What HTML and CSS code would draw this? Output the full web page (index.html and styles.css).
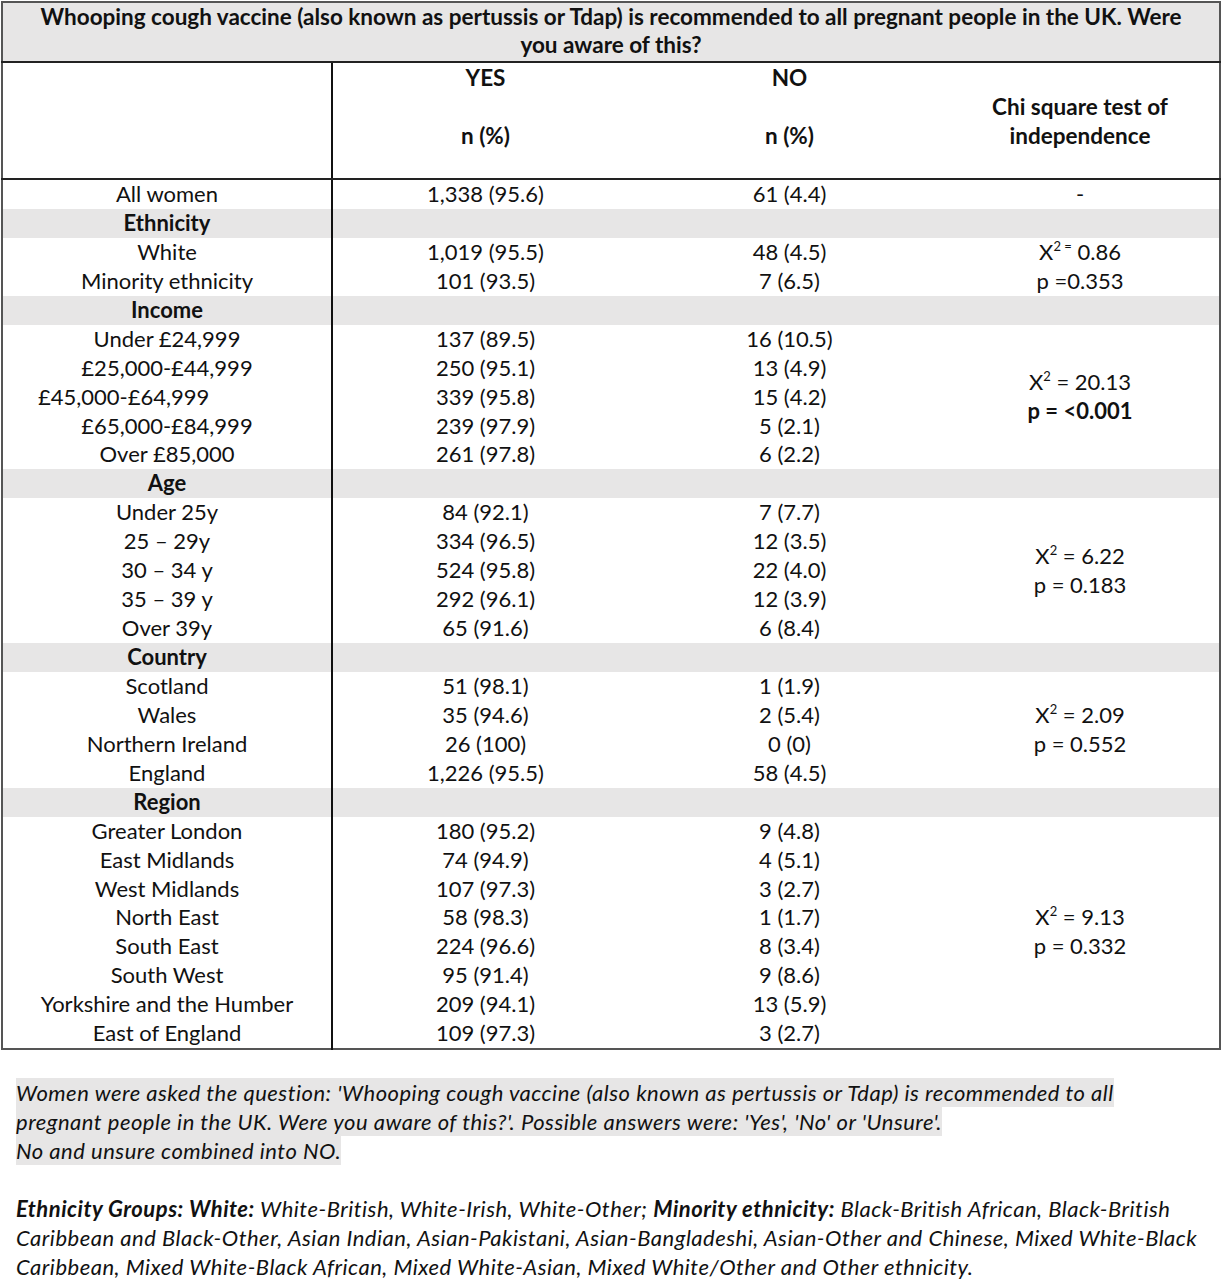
FILE: index.html
```html
<!DOCTYPE html>
<html lang="en">
<head>
<meta charset="utf-8">
<title>Whooping cough vaccine awareness</title>
<link rel="stylesheet" href="styles.css">
</head>
<body>
<table class="data">
  <colgroup>
    <col class="c1"><col class="c2"><col class="c3"><col class="c4">
  </colgroup>
  <thead>
    <tr class="title-row">
      <th colspan="4">Whooping cough vaccine (also known as pertussis or Tdap) is recommended to all pregnant people in the UK. Were<br>you aware of this?</th>
    </tr>
    <tr class="head-row">
      <th class="lab"></th>
      <th>YES<br><br>n (%)</th>
      <th>NO<br><br>n (%)</th>
      <th><br>Chi square test of<br>independence</th>
    </tr>
  </thead>
  <tbody>
    <tr><td class="lab">All women</td><td>1,338 (95.6)</td><td>61 (4.4)</td><td>-</td></tr>

    <tr class="sec"><td class="lab">Ethnicity</td><td></td><td></td><td></td></tr>
    <tr><td class="lab">White</td><td>1,019 (95.5)</td><td>48 (4.5)</td><td rowspan="2" class="chi">X<sup>2 =</sup> 0.86<br>p =0.353</td></tr>
    <tr><td class="lab">Minority ethnicity</td><td>101 (93.5)</td><td>7 (6.5)</td></tr>

    <tr class="sec"><td class="lab">Income</td><td></td><td></td><td></td></tr>
    <tr><td class="lab">Under £24,999</td><td>137 (89.5)</td><td>16 (10.5)</td><td rowspan="5" class="chi">X<sup>2</sup> = 20.13<br><b>p = &lt;0.001</b></td></tr>
    <tr><td class="lab">£25,000-£44,999</td><td>250 (95.1)</td><td>13 (4.9)</td></tr>
    <tr><td class="lab shift">£45,000-£64,999</td><td>339 (95.8)</td><td>15 (4.2)</td></tr>
    <tr><td class="lab">£65,000-£84,999</td><td>239 (97.9)</td><td>5 (2.1)</td></tr>
    <tr><td class="lab">Over £85,000</td><td>261 (97.8)</td><td>6 (2.2)</td></tr>

    <tr class="sec"><td class="lab">Age</td><td></td><td></td><td></td></tr>
    <tr><td class="lab">Under 25y</td><td>84 (92.1)</td><td>7 (7.7)</td><td rowspan="5" class="chi">X<sup>2</sup> = 6.22<br>p = 0.183</td></tr>
    <tr><td class="lab">25 – 29y</td><td>334 (96.5)</td><td>12 (3.5)</td></tr>
    <tr><td class="lab">30 – 34 y</td><td>524 (95.8)</td><td>22 (4.0)</td></tr>
    <tr><td class="lab">35 – 39 y</td><td>292 (96.1)</td><td>12 (3.9)</td></tr>
    <tr><td class="lab">Over 39y</td><td>65 (91.6)</td><td>6 (8.4)</td></tr>

    <tr class="sec"><td class="lab">Country</td><td></td><td></td><td></td></tr>
    <tr><td class="lab">Scotland</td><td>51 (98.1)</td><td>1 (1.9)</td><td rowspan="4" class="chi">X<sup>2</sup> = 2.09<br>p = 0.552</td></tr>
    <tr><td class="lab">Wales</td><td>35 (94.6)</td><td>2 (5.4)</td></tr>
    <tr><td class="lab">Northern Ireland</td><td>26 (100)</td><td>0 (0)</td></tr>
    <tr><td class="lab">England</td><td>1,226 (95.5)</td><td>58 (4.5)</td></tr>

    <tr class="sec"><td class="lab">Region</td><td></td><td></td><td></td></tr>
    <tr><td class="lab">Greater London</td><td>180 (95.2)</td><td>9 (4.8)</td><td rowspan="8" class="chi">X<sup>2</sup> = 9.13<br>p = 0.332</td></tr>
    <tr><td class="lab">East Midlands</td><td>74 (94.9)</td><td>4 (5.1)</td></tr>
    <tr><td class="lab">West Midlands</td><td>107 (97.3)</td><td>3 (2.7)</td></tr>
    <tr><td class="lab">North East</td><td>58 (98.3)</td><td>1 (1.7)</td></tr>
    <tr><td class="lab">South East</td><td>224 (96.6)</td><td>8 (3.4)</td></tr>
    <tr><td class="lab">South West</td><td>95 (91.4)</td><td>9 (8.6)</td></tr>
    <tr><td class="lab">Yorkshire and the Humber</td><td>209 (94.1)</td><td>13 (5.9)</td></tr>
    <tr><td class="lab">East of England</td><td>109 (97.3)</td><td>3 (2.7)</td></tr>
  </tbody>
</table>

<div class="notes">
  <div class="note">
    <div class="mark">Women were asked the question: 'Whooping cough vaccine (also known as pertussis or Tdap) is recommended to all</div>
    <div class="mark">pregnant people in the UK. Were you aware of this?'. Possible answers were: 'Yes', 'No' or 'Unsure'.</div>
    <div class="mark">No and unsure combined into NO.</div>
  </div>
  <div class="note">
    <div><b>Ethnicity Groups: White:</b> White-British, White-Irish, White-Other; <b>Minority ethnicity:</b> Black-British African, Black-British</div>
    <div>Caribbean and Black-Other, Asian Indian, Asian-Pakistani, Asian-Bangladeshi, Asian-Other and Chinese, Mixed White-Black</div>
    <div>Caribbean, Mixed White-Black African, Mixed White-Asian, Mixed White/Other and Other ethnicity.</div>
  </div>
</div>
</body>
</html>
```

FILE: styles.css
```css
html, body {
  margin: 0;
  padding: 0;
  background: #ffffff;
}

body {
  padding: 1px 0 0 1px;
  font-family: Lato, "Open Sans", "Liberation Sans", sans-serif;
  font-size: 22px;
  color: #111111;
  overflow: hidden;
}

.data {
  border-collapse: collapse;
  table-layout: fixed;
  width: 1218px;
  border: 2px solid #555555;
}

.c1 { width: 330px; }
.c2 { width: 306px; }
.c3 { width: 303px; }
.c4 { width: 279px; }

.data th,
.data td {
  padding: 0;
  text-align: center;
  line-height: 28.93px;
  height: 28.93px;
  font-weight: normal;
  white-space: nowrap;
}

.data th {
  font-weight: bold;
  font-size: 22.5px;
  vertical-align: top;
}

.title-row th {
  background: #e7e6e6;
  height: 58px;
  padding: 0;
  line-height: 28px;
  border-bottom: 2px solid #222222;
}

.head-row th {
  height: 115px;
  line-height: 29px;
  border-bottom: 2px solid #222222;
}

.data .lab {
  border-right: 2px solid #111111;
}

.sec td {
  background: #e7e6e6;
}

.sec .lab {
  font-weight: bold;
}

.data td.shift {
  text-align: left;
  padding-left: 35px;
}

.chi {
  vertical-align: middle;
}

.chi sup {
  font-size: 13px;
  line-height: 0;
  vertical-align: 9px;
}

.notes {
  padding: 28px 0 0 15px;
}

.note {
  margin: 0 0 29px 0;
  font-style: italic;
  font-size: 22px;
  letter-spacing: 0.5px;
  line-height: 29px;
  white-space: nowrap;
}

.note:last-child {
  margin-bottom: 0;
}

.mark {
  width: fit-content;
  background: #e7e6e6;
}
```
